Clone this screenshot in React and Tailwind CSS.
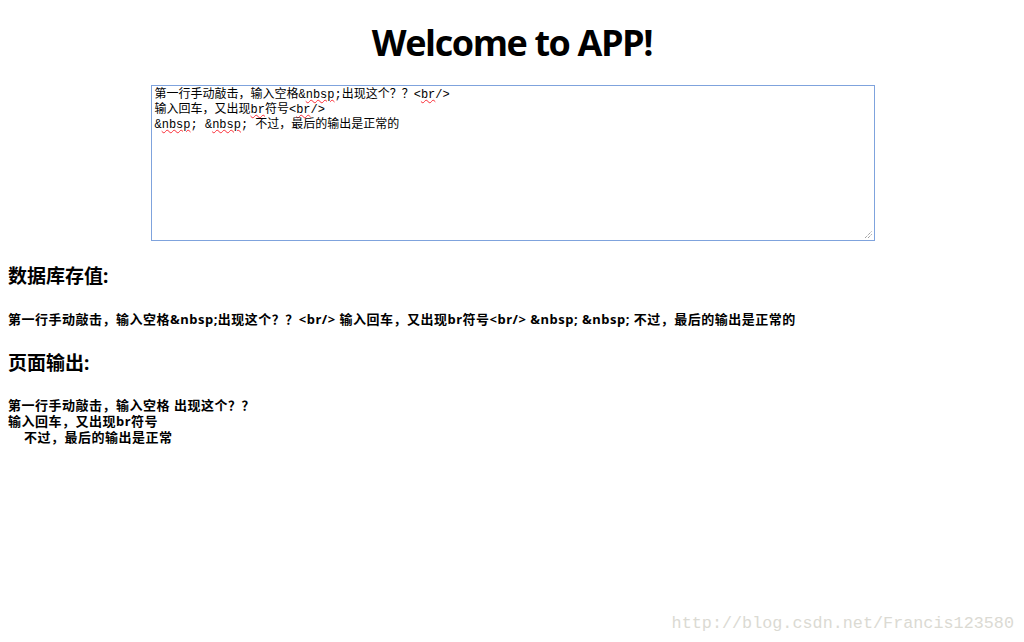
import React from "react";

const sq = "underline decoration-wavy decoration-red-500 decoration-1 underline-offset-[1px]";

export default function App() {
  return (
    <div className="relative w-[1024px] h-[642px] bg-white text-black overflow-hidden [text-spacing-trim:space-all]" style={{ fontFamily: '"Noto Sans", "Noto Sans CJK SC", sans-serif' }}>
      <h1 className="text-center text-[36px] font-bold leading-[44px] pt-[21px] tracking-[-1.4px]" style={{ fontFamily: '"Open Sans", "Noto Sans CJK SC", sans-serif' }}>
        Welcome to APP!
      </h1>
      <div className="flex justify-center mt-[20px] pl-[1px]">
        <div className="relative w-[724px] h-[156px] border border-[#7fa3dd] px-[3px] py-[2px] text-[12px] leading-[15px]" style={{ fontFamily: '"Liberation Mono", "Noto Sans CJK SC", monospace' }}>
          <div>第一行手动敲击，输入空格&amp;<span className={sq}>nbsp</span>;出现这个？？&lt;<span className={sq}>br</span>/&gt;</div>
          <div>输入回车，又出现<span className={sq}>br</span>符号&lt;<span className={sq}>br</span>/&gt;</div>
          <div>&amp;<span className={sq}>nbsp</span>; &amp;<span className={sq}>nbsp</span>; 不过，最后的输出是正常的</div>
          <svg className="absolute right-[1px] bottom-[1px]" width="10" height="10" viewBox="0 0 10 10">
            <line x1="2" y1="9" x2="9" y2="2" stroke="#777" strokeWidth="1" strokeDasharray="1 1" />
            <line x1="5" y1="9" x2="9" y2="5" stroke="#777" strokeWidth="1" strokeDasharray="1 1" />
          </svg>
        </div>
      </div>
      <div className="px-[8px]">
        <h3 className="text-[19px] font-bold leading-[22px] mt-[24px]">数据库存值:</h3>
        <p className="text-[13px] font-bold leading-[16px] mt-[24px] tracking-[0.5px]">
          第一行手动敲击，输入空格&amp;nbsp;出现这个？？&lt;br/&gt; 输入回车，又出现br符号&lt;br/&gt; &amp;nbsp; &amp;nbsp; 不过，最后的输出是正常的
        </p>
        <h3 className="text-[19px] font-bold leading-[22px] mt-[25px]">页面输出:</h3>
        <p className="text-[13px] font-bold leading-[16px] mt-[23px] tracking-[0.5px]">
          第一行手动敲击，输入空格 出现这个？？<br />
          输入回车，又出现br符号<br />
          <span className="pl-[16px]">不过，最后的输出是正常</span>
        </p>
      </div>
      <div className="absolute right-[10px] bottom-[6px] text-[16.8px] text-[#dbdad3]" style={{ fontFamily: '"Liberation Mono", "DejaVu Sans Mono", monospace' }}>
        http://blog.csdn.net/Francis123580
      </div>
    </div>
  );
}
